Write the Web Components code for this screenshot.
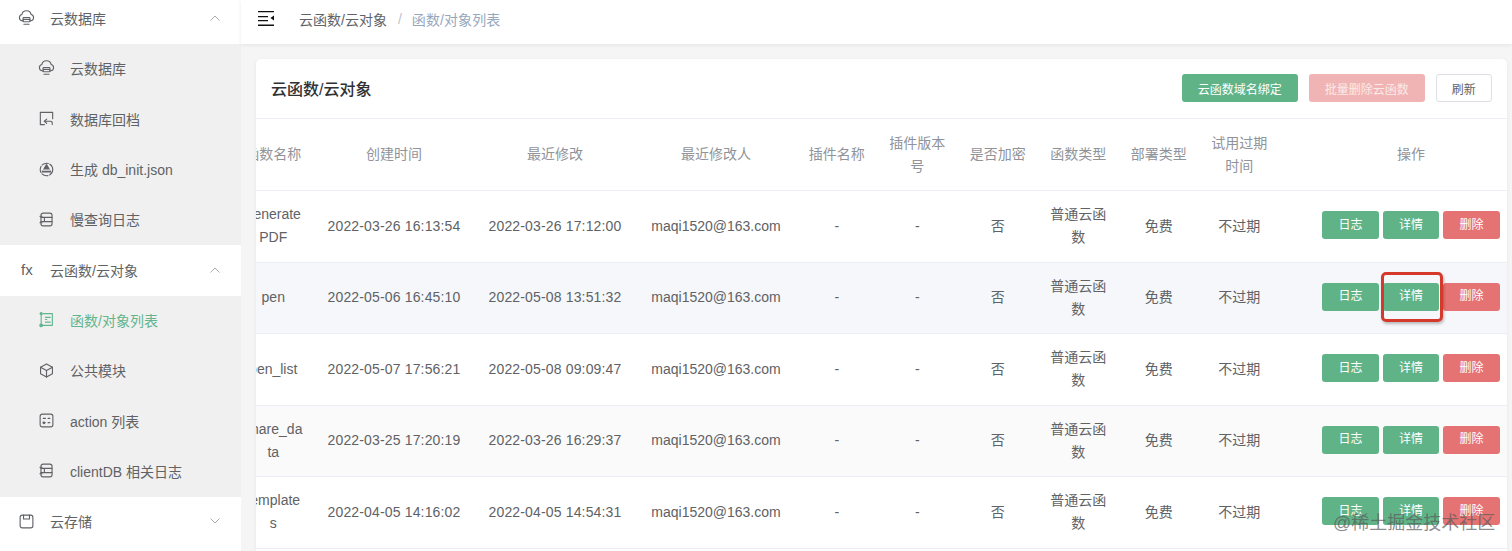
<!DOCTYPE html>
<html lang="zh">
<head>
<meta charset="utf-8">
<title>云函数/云对象</title>
<style>
  html, body { margin: 0; height: 551px; overflow: hidden; background: #f5f5f5; }
  body { font: 14px "Liberation Sans", "Noto Sans CJK SC", sans-serif; color: #606266; }
</style>
</head>
<body>
<app-shell></app-shell>
<script>
const ICONS = {
  cloud: '<path d="M4.8 10.2H4.2a3 3 0 0 1-.6-5.9 4.5 4.5 0 0 1 8.8 0 3 3 0 0 1-.6 5.9h-.6"/><rect x="4.8" y="7.2" width="6.4" height="3.8" rx=".5"/><path d="M4.8 9h6.4M5.6 13.4h4.8"/>',
  backup: '<path d="M6 13.8H2.2V2.2h11.6v6"/><path d="M8.2 8.6L6 10.6l2.2 2"/><path d="M6 10.6h5.8a1.6 1.6 0 0 1 1.6 1.6v1.4"/>',
  init: '<circle cx="8" cy="8" r="5.9" stroke-dasharray="6 1.6"/><path d="M8 3.4l4 7H4z" fill="currentColor"/><path d="M4.8 8.6h6.4" stroke="#f0f0f0"/>',
  log: '<rect x="2.8" y="2" width="10.4" height="12" rx="2"/><path d="M2.8 6h10.4M2.8 10h10.4M6 6v4"/><path d="M1.8 5h2M1.8 11h2"/>',
  list: '<path d="M3 2.5v11"/><circle cx="3" cy="2.5" r="1" fill="currentColor"/><circle cx="3" cy="13.5" r="1.3" fill="currentColor"/><path d="M5 2.5h8.5v11H5"/><path d="M7 6h4.5M7 8h1.2M7 10.5h4.5"/>',
  cube: '<path d="M8 1.8l5.6 3.1v6.2L8 14.2l-5.6-3.1V4.9z"/><path d="M2.4 4.9L8 8l5.6-3.1M8 8v6.2"/>',
  action: '<rect x="2" y="2" width="12" height="12" rx="2"/><path d="M5 6h2M9.5 6h1.6M5 10h1.6M9.5 10h1.6"/><circle cx="5.6" cy="10.2" r=".8"/>',
  storage: '<rect x="2" y="2" width="12" height="12" rx="2"/><path d="M5.2 2v3.6h5.6V2"/>'
};

function iconSvg(name) {
  return `<svg viewBox="0 0 16 16" width="17" height="17" fill="none" stroke="currentColor" stroke-width="1.05" stroke-linecap="round" stroke-linejoin="round">${ICONS[name]}</svg>`;
}

// first level row of the menu, the chevron shows if the group is open
class NavGroup extends HTMLElement {
  constructor() {
    super();
    this.attachShadow({ mode: 'open' });
    const open = this.hasAttribute('open');
    const icon = this.getAttribute('icon');
    const glyph = icon === 'fx' ? '<span class="fx">fx</span>' : iconSvg(icon);
    this.shadowRoot.innerHTML = `
      <style>
        :host { display: block; }
        .head {
          height: 50.3px;
          box-sizing: border-box;
          display: flex;
          align-items: center;
          padding: 0 20px 2px 18px;
          background: #fff;
        }
        .glyph { width: 32px; display: flex; align-items: center; color: #5d6066; }
        .fx { font-size: 15px; padding-left: 3px; }
        .label { flex: 1; }
        .chev { color: #a9acb1; display: block; }
        .subs { display: ${open ? 'block' : 'none'}; background: #f0f0f0; }
      </style>
      <div class="head">
        <span class="glyph">${glyph}</span>
        <span class="label">${this.getAttribute('label')}</span>
        <svg class="chev" viewBox="0 0 12 8" width="12" height="8" fill="none" stroke="currentColor" stroke-width="1">
          <path d="${open ? 'M1.5 6.5L6 2l4.5 4.5' : 'M1.5 1.5L6 6l4.5-4.5'}"/>
        </svg>
      </div>
      <div class="subs"><slot></slot></div>
    `;
  }
}

class NavItem extends HTMLElement {
  constructor() {
    super();
    this.attachShadow({ mode: 'open' });
    this.shadowRoot.innerHTML = `
      <style>
        :host {
          display: flex;
          align-items: center;
          height: 50.3px;
          box-sizing: border-box;
          padding: 0 0 2px 38px;
          color: #606266;
        }
        :host([active]) { color: #62b58d; }
        .glyph { width: 32px; display: flex; align-items: center; }
      </style>
      <span class="glyph">${iconSvg(this.getAttribute('icon'))}</span>
      <slot></slot>
    `;
  }
}

class AppSidebar extends HTMLElement {
  constructor() {
    super();
    this.attachShadow({ mode: 'open' });
    this.shadowRoot.innerHTML = `
      <style>
        :host { display: block; width: 241px; flex: none; background: #fff; overflow: hidden; }
        .menu { margin-top: -6px; }
      </style>
      <div class="menu">
        <nav-group label="云数据库" icon="cloud" open>
          <nav-item icon="cloud">云数据库</nav-item>
          <nav-item icon="backup">数据库回档</nav-item>
          <nav-item icon="init">生成 db_init.json</nav-item>
          <nav-item icon="log">慢查询日志</nav-item>
        </nav-group>
        <nav-group label="云函数/云对象" icon="fx" open>
          <nav-item icon="list" active>函数/对象列表</nav-item>
          <nav-item icon="cube">公共模块</nav-item>
          <nav-item icon="action">action 列表</nav-item>
          <nav-item icon="log">clientDB 相关日志</nav-item>
        </nav-group>
        <nav-group label="云存储" icon="storage"></nav-group>
      </div>
    `;
  }
}

class AppTopbar extends HTMLElement {
  constructor() {
    super();
    this.attachShadow({ mode: 'open' });
    this.shadowRoot.innerHTML = `
      <style>
        :host {
          display: flex;
          align-items: center;
          height: 44px;
          flex: none;
          box-sizing: border-box;
          padding: 0 0 7px 17px;
          background: #fff;
          box-shadow: 0 1px 4px rgba(0, 21, 41, 0.08);
          position: relative;
        }
        svg { display: block; margin-right: 24px; }
        .sep { color: #c0c4cc; margin: 0 10px 0 11px; }
        .cur { color: #97a8be; letter-spacing: 0.1px; }
      </style>
      <svg viewBox="0 0 17 15" width="17" height="15" fill="#111">
        <path d="M0 0h16v1.3H0zM0 5h10v1.3H0zM0 9h10v1.3H0zM0 13.6h16v1.3H0zM16 4.6v5l-3.6-2.5z"/>
      </svg>
      <span>云函数/云对象</span><span class="sep">/</span><span class="cur">函数/对象列表</span>
    `;
  }
}

class UiBtn extends HTMLElement {
  constructor() {
    super();
    this.attachShadow({ mode: 'open' });
    this.shadowRoot.innerHTML = `
      <style>
        :host {
          display: inline-flex;
          align-items: center;
          justify-content: center;
          box-sizing: border-box;
          height: 28px;
          width: 56.5px;
          border-radius: 3px;
          font-size: 12px;
          color: #fff;
          background: #5fb387;
          flex: none;
        }
        :host([kind="danger"]) { background: #e67373; }
        :host([kind="danger-off"]) { background: #f0b4b4; color: #fbeaea; }
        :host([kind="plain"]) { background: #fff; color: #606266; border: 1px solid #dcdfe6; }
        :host([wide]) { width: 116.5px; }
      </style>
      <slot></slot>
    `;
  }
}

const COLS = [
  ['函数名称', 80.5], ['创建时间', 161], ['最近修改', 161], ['最近修改人', 161], ['插件名称', 80.5],
  ['插件版本号', 80.5], ['是否加密', 80.5], ['函数类型', 80.5], ['部署类型', 80.5], ['试用过期时间', 80.5], ['操作', 263]
];
const ROWS = [
  ['generate PDF', '2022-03-26 16:13:54', '2022-03-26 17:12:00'],
  ['pen', '2022-05-06 16:45:10', '2022-05-08 13:51:32'],
  ['pen_list', '2022-05-07 17:56:21', '2022-05-08 09:09:47'],
  ['share_data', '2022-03-25 17:20:19', '2022-03-26 16:29:37'],
  ['templates', '2022-04-05 14:16:02', '2022-04-05 14:54:31']
];

class FnTable extends HTMLElement {
  constructor() {
    super();
    this.attachShadow({ mode: 'open' });
    const rows = ROWS.map((r, i) => `
      <tr class="${i === 1 ? 'hover' : i === 3 ? 'stripe' : ''}">
        <td class="name">${r[0]}</td><td class="date">${r[1]}</td><td class="date">${r[2]}</td><td>maqi1520@163.com</td>
        <td>-</td><td>-</td><td>否</td><td>普通云函数</td><td>免费</td><td>不过期</td>
        <td><div class="ops">
          <ui-btn>日志</ui-btn><ui-btn>详情</ui-btn><ui-btn kind="danger">删除</ui-btn>
        </div></td>
      </tr>`).join('');
    this.shadowRoot.innerHTML = `
      <style>
        :host { display: block; overflow: hidden; }
        table {
          table-layout: fixed;
          border-collapse: collapse;
          width: 1309.5px;
          margin-left: -23px;
        }
        th, td {
          padding: 0 12px;
          text-align: center;
          line-height: 23px;
          font-weight: 400;
          word-break: break-all;
          border-bottom: 1px solid #ebeef5;
        }
        th { height: 71.5px; color: #909399; box-sizing: border-box; }
        td { height: 71.5px; box-sizing: border-box; color: #606266; }
        td.name { padding: 0 10px; }
        td.date { letter-spacing: 0.15px; }
        .hover td { background: #f5f7fa; }
        .stripe td { background: #fafafa; }
        .ops { display: flex; justify-content: center; gap: 4px; margin-top: -2px; }
      </style>
      <table>
        <colgroup>${COLS.map(c => `<col style="width:${c[1]}px">`).join('')}</colgroup>
        <thead><tr>${COLS.map(c => `<th>${c[0]}</th>`).join('')}</tr></thead>
        <tbody>${rows}</tbody>
      </table>
    `;
  }
}

class FnCard extends HTMLElement {
  constructor() {
    super();
    this.attachShadow({ mode: 'open' });
    this.shadowRoot.innerHTML = `
      <style>
        :host {
          display: block;
          background: #fff;
          border-radius: 5px 5px 0 0;
          overflow: hidden;
          box-shadow: 0 1px 4px rgba(0, 0, 0, 0.06);
          flex: 1;
        }
        .head {
          height: 60px;
          box-sizing: border-box;
          display: flex;
          align-items: center;
          padding: 0 15px 1px;
          gap: 10.5px;
          border-bottom: 1px solid #ebeef5;
        }
        h1 { flex: 1; margin: 0; font-size: 16px; font-weight: 500; color: #303133; }
      </style>
      <div class="head">
        <h1>云函数/云对象</h1>
        <ui-btn wide>云函数域名绑定</ui-btn>
        <ui-btn wide kind="danger-off">批量删除云函数</ui-btn>
        <ui-btn kind="plain">刷新</ui-btn>
      </div>
      <fn-table></fn-table>
    `;
  }
}

class AppShell extends HTMLElement {
  constructor() {
    super();
    this.attachShadow({ mode: 'open' });
    this.shadowRoot.innerHTML = `
      <style>
        :host { display: flex; height: 551px; overflow: hidden; position: relative; }
        main { flex: 1; min-width: 0; display: flex; flex-direction: column; }
        .content { flex: 1; min-height: 0; display: flex; padding: 15px 5px 0 15px; }
        /* red box drawn on top of the screenshot */
        .mark {
          position: absolute;
          left: 1381px;
          top: 272px;
          width: 62px;
          height: 50px;
          box-sizing: border-box;
          border: 3px solid #d5392c;
          border-radius: 5px;
          box-shadow: 1px 2px 3px rgba(0, 0, 0, 0.25);
        }
        .wm {
          position: absolute;
          left: 1333px;
          top: 511px;
          font-size: 18px;
          line-height: 24px;
          color: rgba(90, 90, 90, 0.7);
          white-space: nowrap;
        }
      </style>
      <app-sidebar></app-sidebar>
      <main>
        <app-topbar></app-topbar>
        <div class="content"><fn-card></fn-card></div>
      </main>
      <div class="mark"></div>
      <div class="wm">@稀土掘金技术社区</div>
    `;
  }
}

customElements.define('nav-group', NavGroup);
customElements.define('nav-item', NavItem);
customElements.define('app-sidebar', AppSidebar);
customElements.define('app-topbar', AppTopbar);
customElements.define('ui-btn', UiBtn);
customElements.define('fn-table', FnTable);
customElements.define('fn-card', FnCard);
customElements.define('app-shell', AppShell);
</script>
</body>
</html>
